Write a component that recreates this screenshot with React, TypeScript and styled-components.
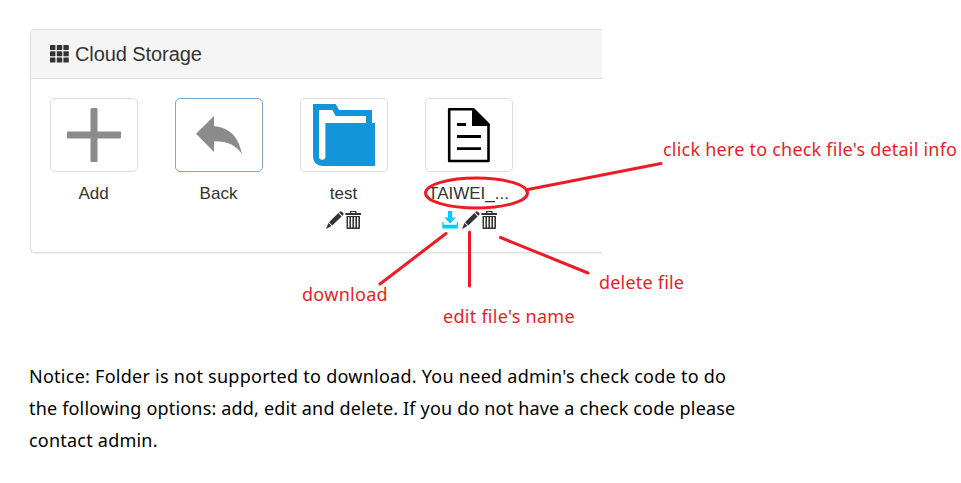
import React from "react";
import styled, { createGlobalStyle } from "styled-components";

const GlobalStyle = createGlobalStyle`
  body { margin: 0; background: #fff; }
  * { box-sizing: border-box; }
`;

const Page = styled.main`
  position: relative;
  width: 961px;
  height: 483px;
  overflow: hidden;
  padding: 29px 0 0 30px;
  font-family: "Liberation Sans", Arial, sans-serif;
  color: #333;
`;

const Panel = styled.section`
  width: 572px;
  height: 224px;
  border: 1px solid #ddd;
  border-right: 0;
  border-radius: 5px 0 0 5px;
  box-shadow: 0 1px 1px rgba(0, 0, 0, 0.05);
  overflow: hidden;
`;

const PanelHeader = styled.header`
  display: flex;
  align-items: center;
  gap: 6px;
  height: 49px;
  padding-left: 19px;
  background: #f5f5f5;
  border-bottom: 1px solid #ddd;
`;

const PanelTitle = styled.h1`
  margin: 0;
  font-size: 20px;
  font-weight: 400;
  line-height: 24px;
  letter-spacing: -0.08px;
`;

const Tiles = styled.div`
  display: grid;
  grid-template-columns: repeat(4, 88px);
  column-gap: 37px;
  padding: 19px 0 0 19px;
`;

const Tile = styled.div`
  display: flex;
  flex-direction: column;
  align-items: center;
`;

const Thumb = styled.button<{ $active?: boolean }>`
  display: block;
  width: 88px;
  height: 74px;
  padding: 0;
  background: #fff;
  border: 1px solid ${(p) => (p.$active ? "#7fa8cc" : "#ddd")};
  border-radius: 5px;
`;

const Caption = styled.span`
  margin: 9px 1px 0 0;
  font-size: 17px;
  line-height: 25px;
  white-space: nowrap;
`;

const Actions = styled.div`
  display: flex;
  gap: 1px;
  margin-top: 5px;
  height: 18px;
`;

const FileActions = styled(Actions)`
  padding-left: 1px;

  & > :first-child {
    margin-right: 2px;
  }
`;

const Glyph = styled.svg`
  display: block;
  flex: none;
`;

const Notice = styled.p`
  margin: 107px 0 0 -1px;
  font: 18px/32px "Noto Sans", sans-serif;
  color: #000;
`;

const Line = styled.span<{ $spacing: number }>`
  display: block;
  white-space: nowrap;
  letter-spacing: ${(p) => p.$spacing}px;
`;

const Marks = styled.svg`
  position: absolute;
  inset: 0;
  pointer-events: none;
`;

const Note = styled.span<{ $x: number; $y: number; $spacing: number }>`
  position: absolute;
  left: ${(p) => p.$x}px;
  top: ${(p) => p.$y}px;
  font: 18px/24px "Noto Sans", sans-serif;
  letter-spacing: ${(p) => p.$spacing}px;
  white-space: nowrap;
  color: #ed1c24;
`;

const GridIcon = () => (
  <Glyph width="19" height="18" viewBox="0 0 19 18" fill="#333">
    {[0, 6.2, 12.4].map((y) =>
      [0, 6.8, 13.4].map((x) => (
        <rect key={`${x}-${y}`} x={x} y={y} width="5.4" height="5.1" rx="0.5" />
      ))
    )}
  </Glyph>
);

const Pencil = () => (
  <Glyph width="18" height="18" viewBox="0 0 18 18" fill="#333">
    <path d="M13.1 1.3 14 .5Q14.9-.1 15.8.7L17.2 2.1Q18 3 17.3 3.8L16.2 4.8ZM12.3 2.1 15.6 5.5 6.2 14.4 3 11.2ZM2.4 12 5.5 15 0 18Z" />
  </Glyph>
);

const Trash = () => (
  <Glyph width="17" height="18" viewBox="0 0 17 18" fill="#333">
    <path
      fillRule="evenodd"
      d="M5 0H11.5V2H16V4H.4V2H5ZM6.3 1.1V2H10.2V1.1ZM1.5 5H15V17Q15 18 14 18H2.5Q1.5 18 1.5 17ZM3 6V16.5H4.4V6ZM6 6V16.5H7.4V6ZM9 6V16.5H10.4V6ZM12 6V16.5H13.4V6Z"
    />
  </Glyph>
);

const Download = () => (
  <Glyph width="17" height="18" viewBox="0 0 17 18" fill="#0cf">
    <path d="M6 0H10.2V6.5H13.8L8.1 12.6 2.4 6.5H6ZM.3 11H1.6V13.7H14.7V11H16V17.5H.3Z" />
  </Glyph>
);

const PlusArt = () => (
  <Glyph width="86" height="72" fill="#8b8b8b">
    <rect x="16" y="32.5" width="54" height="7" rx="1" />
    <rect x="39.5" y="9" width="7" height="54" rx="1" />
  </Glyph>
);

const BackArt = () => (
  <Glyph width="86" height="72" fill="#8b8b8b">
    <path d="M20 34.8 38 17V27.2C53 28 63 38 66 55.3 60 46 52 42.3 38 42.2V53Z" />
  </Glyph>
);

const FolderArt = () => (
  <Glyph width="86" height="72" fill="#1296db">
    <path
      fillRule="evenodd"
      d="M12 5H34.7L38 11H71V24H74V67H21Q12 66 12 57ZM18 11V57.5A3.2 3.2 0 0 0 24.4 57.5V24H65V17H34.6L31.4 11Z"
    />
  </Glyph>
);

const FileArt = () => (
  <Glyph width="86" height="72">
    <path d="M23.2 10.2H46.5L62.5 26V62H23.2Z" fill="none" stroke="#000" strokeWidth="2.6" strokeLinejoin="round" />
    <path d="M46 9H48L64 25V27H46Z" />
    <path d="M31 25.5H40M31 37.5H55M31 49.7H55" fill="none" stroke="#000" strokeWidth="2.8" />
  </Glyph>
);

export default function App() {
  return (
    <Page>
      <GlobalStyle />
      <Panel>
        <PanelHeader>
          <GridIcon />
          <PanelTitle>Cloud Storage</PanelTitle>
        </PanelHeader>
        <Tiles>
          <Tile>
            <Thumb aria-label="Add"><PlusArt /></Thumb>
            <Caption>Add</Caption>
          </Tile>
          <Tile>
            <Thumb $active aria-label="Back"><BackArt /></Thumb>
            <Caption>Back</Caption>
          </Tile>
          <Tile>
            <Thumb aria-label="test"><FolderArt /></Thumb>
            <Caption>test</Caption>
            <Actions><Pencil /><Trash /></Actions>
          </Tile>
          <Tile>
            <Thumb aria-label="File"><FileArt /></Thumb>
            <Caption>TAIWEI_...</Caption>
            <FileActions><Download /><Pencil /><Trash /></FileActions>
          </Tile>
        </Tiles>
      </Panel>
      <Notice>
        <Line $spacing={0.26}>Notice: Folder is not supported to download. You need admin's check code to do</Line>
        <Line $spacing={0.175}>the following options: add, edit and delete. If you do not have a check code please</Line>
        <Line $spacing={0.22}>contact admin.</Line>
      </Notice>
      <Marks width="961" height="483" fill="none" stroke="#ed1c24" strokeWidth="3" strokeLinecap="round">
        <ellipse cx="476.5" cy="193" rx="51" ry="15" />
        <path d="M528 189.5 661 163.5M446 233.5 380 284M469.5 232V286M500.5 237.5 588 273" />
      </Marks>
      <Note $x={663} $y={137} $spacing={0.22}>click here to check file's detail info</Note>
      <Note $x={302} $y={282} $spacing={0.3}>download</Note>
      <Note $x={443} $y={304} $spacing={0.27}>edit file's name</Note>
      <Note $x={599} $y={270} $spacing={0.2}>delete file</Note>
    </Page>
  );
}
